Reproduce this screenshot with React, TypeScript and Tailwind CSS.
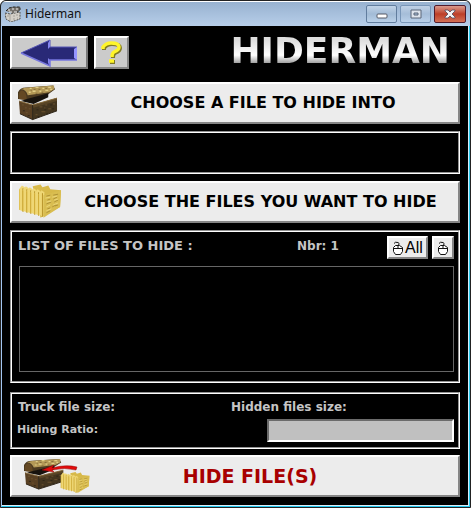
import type { ReactNode } from "react";

function ChestArt() {
  return (
    <g>
      <path d="M0 14 L0 7 Q2 2 8 2 L36 0 L38 4 L31 9 L8 15 Z" fill="#4b3a21" />
      <path d="M3 4 Q6 2 11 2 L37 0 L37 4 L32 7 L10 10 Q8 4 3 4Z" fill="#b39856" />
      <path d="M12 3h2M18 2h3M25 3h2M31 2h3M15 6h3M22 6h2M28 5h3M33 4h2M11 7h2" stroke="#e0cd86" strokeWidth="1.4" />
      <path d="M16 4h2M21 4h2M28 3h2M24 7h2M18 8h2M13 5h1" stroke="#806938" />
      <path d="M1 14 Q0 6 4 5 Q9 6 9 15Z" fill="#644823" />
      <path d="M9 14 L31 8 L31 12 L16 19 L3 16Z" fill="#17130e" />
      <path d="M1 16 L15 20 L15 35 L2 29 Z" fill="#583f22" />
      <path d="M15 20 L40 13 L40 26 L15 35 Z" fill="#43351f" />
      <path d="M15 20 L40 13 L40 16 L15 23Z" fill="#594526" />
      <path d="M1 16 L15 20 L40 13" stroke="#876b3d" fill="none" />
      <path d="M2 29 L15 35 L40 26 M15 20V35" stroke="#2a2115" fill="none" />
      <path d="M22 22h3M28 20h2M24 27h4M31 24h3M18 30h2M7 23h2M8 28h2M27 23h1M36 19h2M4 20h2M11 24h2" stroke="#6c5330" />
      <path d="M19 25h2M27 25h2M33 20h2M20 32h2M29 29h2M5 26h2M10 31h2M35 24h2" stroke="#2d2518" />
    </g>
  );
}

function FilesArt() {
  return (
    <g>
      <path d="M14 2 L22 0 L24 3 L30 1 L32 5 L43 6 L42 23 L22 34Z" fill="#d7b94a" />
      {[0, 4, 8, 12, 16, 20].map((x, i) => (
        <g key={x}>
          <path d={`M${x} ${5 + i} L${x + 3} ${1 + i} L${x + 6} ${3 + i} L${x + 5} ${28 + i} L${x} ${26 + i}Z`} fill="#efd775" />
          <path d={`M${x + 4} ${4 + i} L${x + 4} ${28 + i}`} stroke="#b8942a" />
          <path d={`M${x} ${5 + i} L${x} ${26 + i}`} stroke="#d2ad37" />
        </g>
      ))}
      <path d="M25 11 L43 6 L42 23 L25 34Z" fill="#d9bd50" />
      <path d="M28 12l4-1M35 11l5-1M29 16l3-1M35 15l4-2M28 20l5-2M36 18l4-2M29 25l3-1M34 23l4-2M28 29l4-2M37 22l3-1" stroke="#ae9136" />
      <path d="M27 14l5-1M34 13l5-1M28 18l5-1M36 16l4-1M28 23l4-2M35 21l5-2M28 27l5-2" stroke="#ecd67a" />
    </g>
  );
}

function ChestIcon() {
  return (
    <svg className="h-9 w-10 shrink-0" viewBox="0 0 41 36" aria-hidden="true">
      <ChestArt />
    </svg>
  );
}

function FilesIcon() {
  return (
    <svg className="h-9 w-11 shrink-0" viewBox="0 0 45 36" aria-hidden="true">
      <FilesArt />
    </svg>
  );
}

function HideIcon() {
  return (
    <svg className="h-9 w-17 shrink-0" viewBox="0 0 68 36" aria-hidden="true">
      <g transform="translate(0 1) scale(.98 .86)">
        <ChestArt />
      </g>
      <g transform="translate(37 14) scale(.66 .62)">
        <FilesArt />
      </g>
      <path d="M18 12 L30 7 L28 10 Q42 6 53 9 L52 12 Q41 9 28 12 L30 14Z" fill="#e20b0b" stroke="#8c0808" strokeWidth=".5" />
    </svg>
  );
}

function MouseIcon() {
  return (
    <svg className="h-4 w-3 shrink-0" viewBox="0 0 12 16" fill="none" stroke="#111" aria-hidden="true">
      <path d="M2 3.500 Q3 1.500 6 2.500 Q8 3 6.500 5.500" />
      <path d="M3.500 5.500h4l3 2v4l-2 3h-5l-2-3v-4z" fill="#fff" />
      <path d="M1.500 8.500h9M6 5.500v3" />
    </svg>
  );
}

function AppIcon() {
  return (
    <svg className="h-4 w-4 shrink-0" viewBox="0 0 16 16" aria-hidden="true">
      <path d="M1 5 4 2l4-1 7 0v3l-5 4z" fill="#77736d" />
      <path d="M1 5 4 2l4-1 7 0v3l-5 4" fill="none" stroke="#292927" strokeDasharray="3 1" />
      <path d="m0 7 5 1 10-2v7l-9 3-5-3z" fill="#d4d0c8" stroke="#55534f" strokeDasharray="2 1" />
      <path d="M3 4h2M7 3h2M11 3h2M4 6h3M9 6h3" stroke="#eee" />
      <path d="M5 8v7M2 10h2M8 10h2M11 9h2M8 13h2M12 12h1" stroke="#a5a199" />
    </svg>
  );
}

function Frame({ children, grow = false, className = "" }: { children?: ReactNode; grow?: boolean; className?: string }) {
  return (
    <section className={`flex flex-col border border-t-[#929292] border-r-white border-b-white border-l-[#929292] ${grow ? "flex-1" : ""}`}>
      <div className={`border border-t-white border-r-[#929292] border-b-[#929292] border-l-white ${className}`}>{children}</div>
    </section>
  );
}

const raised =
  "flex items-center border-2 border-t-white border-r-[#858585] border-b-[#858585] border-l-white bg-[#ececec]";

export default function App() {
  return (
    <main className="flex min-h-screen flex-col overflow-hidden rounded-t-md border border-[#222] bg-black font-['DejaVu_Sans',Verdana,sans-serif] font-bold text-[#c5c5c5]">
      <header className="flex h-[25px] items-center border-t border-white bg-linear-to-b from-[#98b2d0] to-[#b7cee9] px-1">
        <AppIcon />
        <h1 className="ml-1 flex-1 font-['Noto_Sans',sans-serif] text-xs font-normal text-[#111]">Hiderman</h1>
        <div className="flex gap-[3px]">
          <button aria-label="Minimize" className="flex h-[18px] w-[31px] items-center justify-center rounded-xs border border-[#617d9e] bg-linear-to-b from-[#c1d3e7] via-[#a2bbd6] to-[#bad1e9]">
            <svg className="mt-1 h-1.5 w-3" viewBox="0 0 12 6" aria-hidden="true"><rect x="1" y="1" width="10" height="4" rx="1" fill="#fff" stroke="#565b66" /></svg>
          </button>
          <button aria-label="Maximize" className="flex h-[18px] w-[31px] items-center justify-center rounded-xs border border-[#7996b8] bg-linear-to-b from-[#bfd1e6] via-[#a5bdd8] to-[#b9d0e9]">
            <svg className="h-2.5 w-3" viewBox="0 0 12 10" aria-hidden="true"><path d="M1 1h10v8H1z" fill="#dfe5ed" stroke="#5a6779" /><path d="M4 4h4v2H4z" fill="#a9bfd9" stroke="#5a6779" /></svg>
          </button>
          <button aria-label="Close" className="flex h-[18px] w-8 items-center justify-center rounded-xs border border-[#531c2c] bg-linear-to-b from-[#d99a8d] via-[#bd3e27] to-[#d36f55]">
            <svg className="h-2.5 w-3" viewBox="0 0 12 10" aria-hidden="true"><path d="M1 1h3l2 2 2-2h3v1L8 5l3 3v1H8L6 7 4 9H1V8l3-3-3-3z" fill="#f5f5f5" stroke="#504b5d" strokeWidth=".8" /></svg>
          </button>
        </div>
      </header>

      <div className="flex flex-1 flex-col border-r border-b border-l border-r-[#24c9ef] border-b-[#24c9ef] border-l-[#a4c6f1]">
        <div className="flex flex-1 flex-col border-r border-b border-[#dcecf7] px-2 pb-2">
          <div className="flex h-14 items-center pb-[3px]">
            <button aria-label="Back" className="flex h-[33px] w-[78px] items-center justify-center border-2 border-t-white border-r-[#777] border-b-[#777] border-l-white bg-[#cbcbcb]">
              <svg className="h-7 w-[58px]" viewBox="0 0 58 28" aria-hidden="true">
                <path d="M1 14 30 1v7h27v13H30v6z" fill="#292977" />
                <path d="M1 14 30 1v7h27" fill="none" stroke="#5656b5" />
                <path d="m57 8-3 2v9l3 2z" fill="#9494ff" />
                <path d="m30 1-2 3v6l2-2zM30 21l-2-2v5l2 3z" fill="#8585ed" />
                <path d="M1 14 30 27v-6h27" fill="none" stroke="#7777df" strokeWidth="1.500" />
              </svg>
            </button>
            <button aria-label="Help" className="ml-1.5 flex h-[33px] w-[35px] items-center justify-center border-2 border-t-white border-r-[#888] border-b-[#888] border-l-white bg-[#cbcbcb]">
              <svg className="h-6 w-6" viewBox="0 0 24 24" fill="none" aria-hidden="true">
                <path d="M4 9V7q3-4 8-4 8 0 8 4 0 3-5 5-2 1-2 5M10 21h5" stroke="#817b25" strokeWidth="4" />
                <path d="M3 8V6q3-4 8-4 8 0 8 4 0 3-5 5-2 1-2 5M9 20h5" stroke="#fff52b" strokeWidth="3.500" />
              </svg>
            </button>
            <div className="flex-1 bg-linear-to-b from-[#ddd] from-20% via-white via-55% to-[#666] to-85% bg-clip-text pr-2.5 pb-1 text-right text-4xl leading-10 text-transparent">HIDERMAN</div>
          </div>

          <button className={`${raised} h-[42px] pl-1.5`}>
            <ChestIcon />
            <span className="flex-1 pl-2.5 text-center text-base text-black">CHOOSE A FILE TO HIDE INTO</span>
          </button>
          <div className="mt-[7px]"><Frame className="h-[41px]" /></div>
          <button className={`${raised} mt-[7px] h-[42px] pl-[7px]`}>
            <FilesIcon />
            <span className="flex-1 text-center text-base whitespace-nowrap text-black">CHOOSE THE FILES YOU WANT TO HIDE</span>
          </button>

          <div className="mt-[7px] flex flex-1 flex-col">
            <Frame grow className="flex flex-1 flex-col px-1 pb-[9px]">
              <div className="flex h-[34px] items-start pt-1 pl-0.5 text-[13px]">
                <h2 id="file-list-title" className="w-[279px]">LIST OF FILES TO HIDE :</h2>
                <span className="flex-1 text-xs leading-5">Nbr: 1</span>
                <button aria-label="Select all" className={`${raised} h-[23px] w-[41px] justify-center gap-px font-['Liberation_Sans',Arial,sans-serif] text-base font-normal text-black`}>
                  <MouseIcon />All
                </button>
                <button aria-label="Select file" className={`${raised} ml-1 h-[23px] w-[22px] justify-center`}>
                  <MouseIcon />
                </button>
              </div>
              <ul aria-labelledby="file-list-title" className="ml-[3px] min-h-16 flex-1 border border-[#666]" />
            </Frame>
          </div>

          <div className="mt-[9px]">
            <Frame className="h-[55px] px-1 pt-[3px]">
              <div className="flex h-5 items-center pl-0.5 text-xs">
                <span className="w-[213px]">Truck file size:</span>
                <span>Hidden files size:</span>
              </div>
              <div className="mt-0.5 flex items-center justify-between pl-px text-[11px]">
                <label htmlFor="ratio">Hiding Ratio:</label>
                <output id="ratio" className="h-[23px] w-[187px] border-2 border-t-[#6b6b6b] border-r-white border-b-white border-l-[#6b6b6b] bg-[#c0c0c0]" />
              </div>
            </Frame>
          </div>
          <button className={`${raised} mt-1.5 h-[42px] pl-3`}>
            <HideIcon />
            <span className="flex-1 pr-[50px] text-center text-[19px] text-[#a80000]">HIDE FILE(S)</span>
          </button>
        </div>
      </div>
    </main>
  );
}
